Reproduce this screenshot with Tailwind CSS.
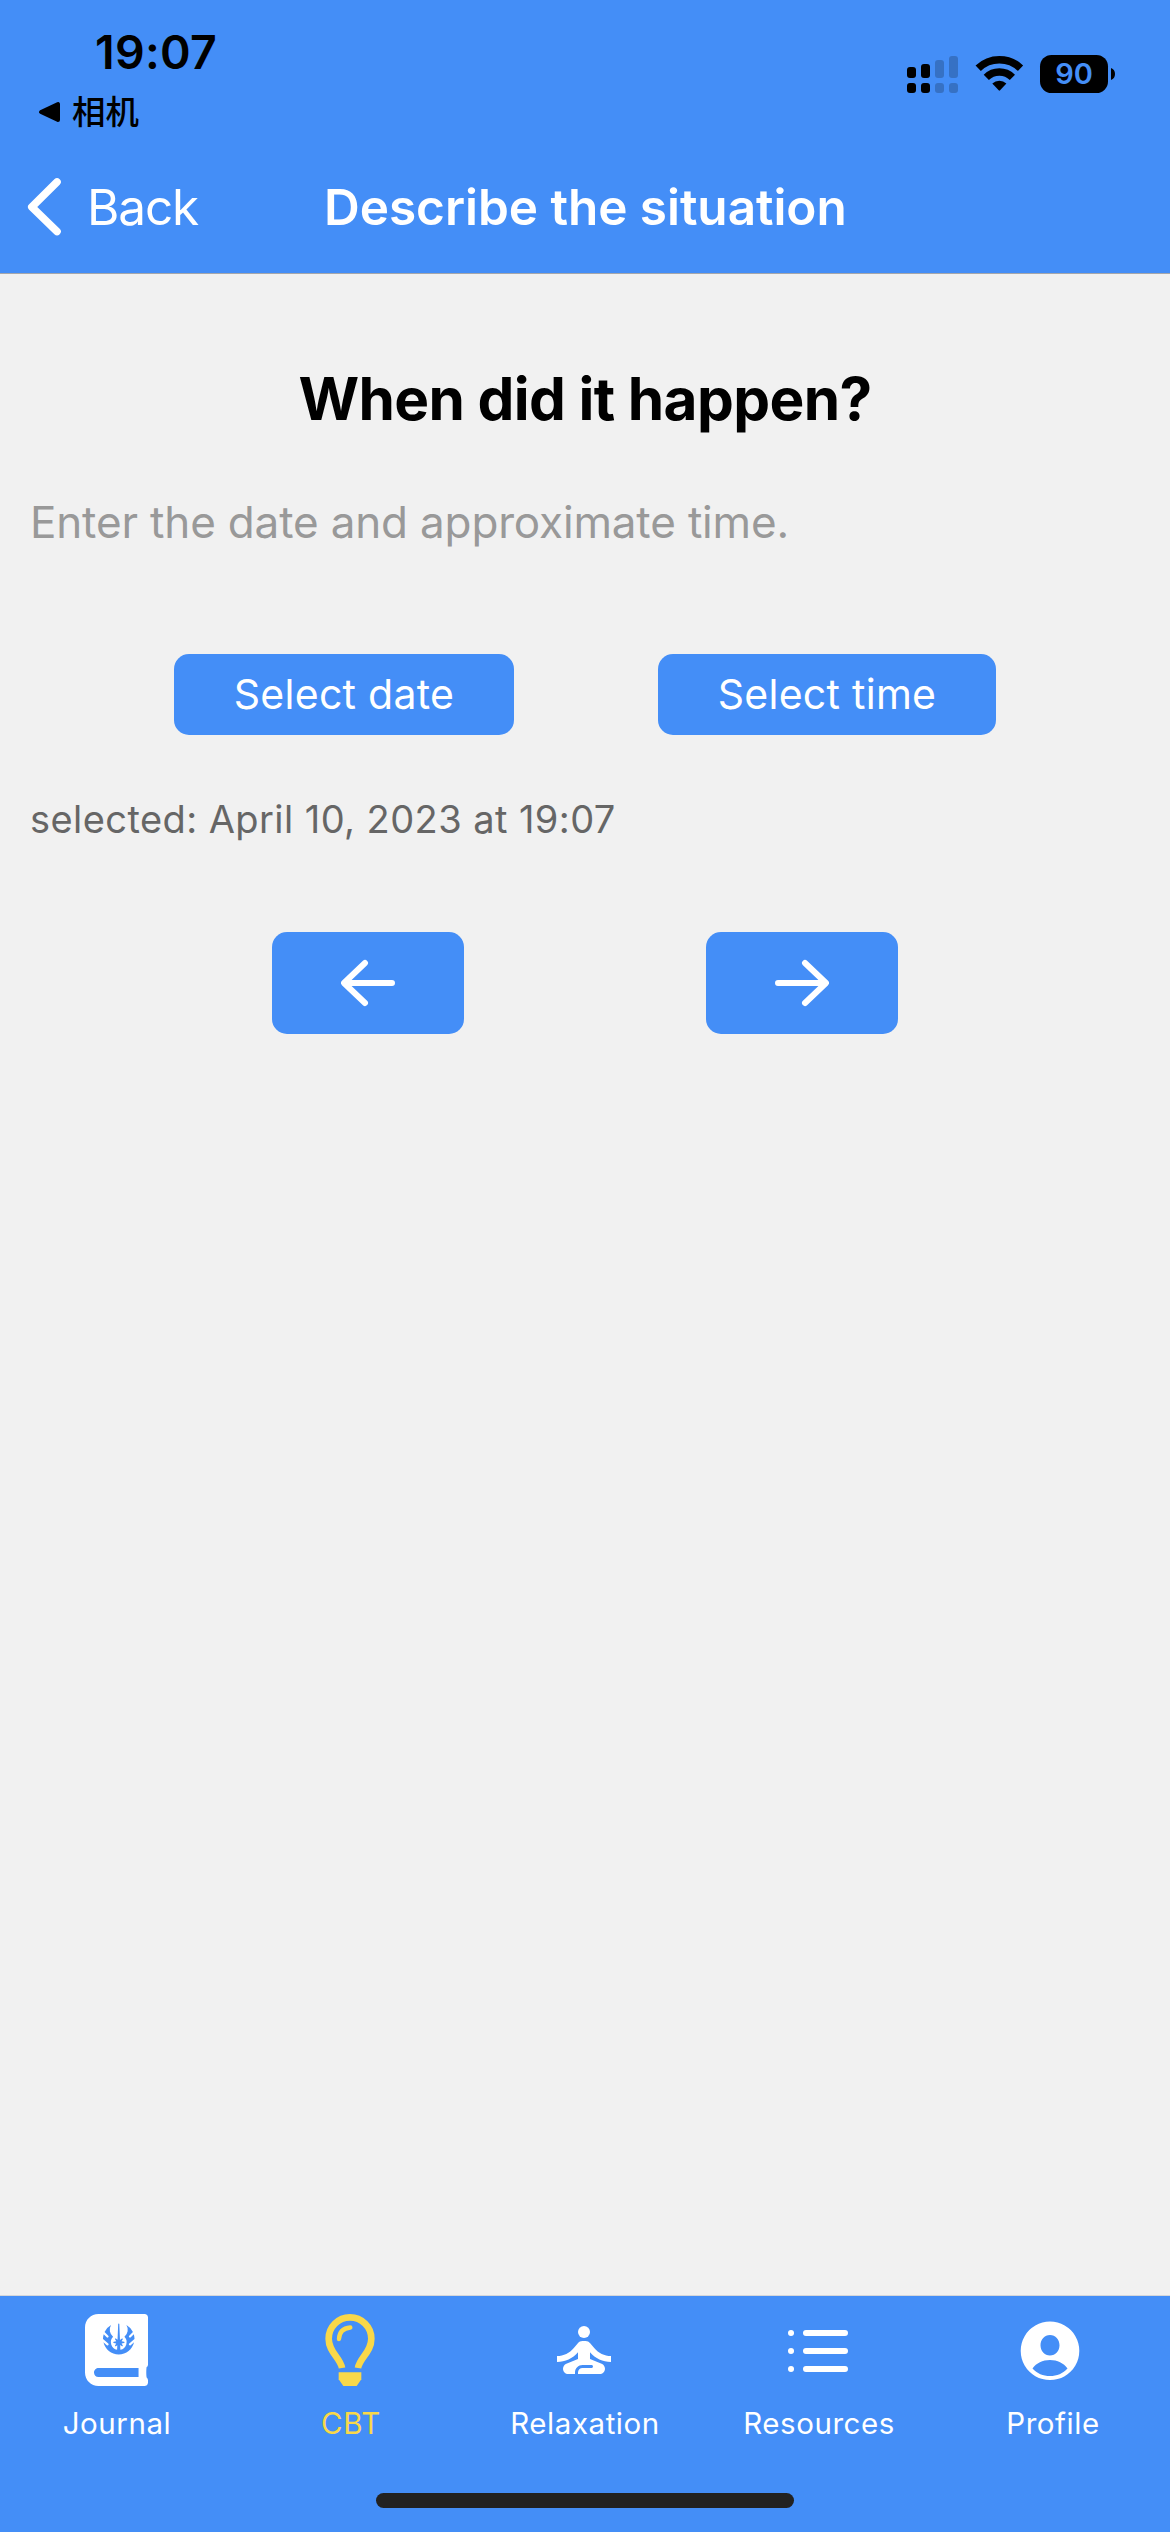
<!DOCTYPE html>
<html lang="en">
<head>
<meta charset="utf-8">
<title>Describe the situation</title>
<script src="https://cdn.jsdelivr.net/npm/@tailwindcss/browser@4"></script>
</head>
<body class="w-[1170px] h-[2532px] overflow-hidden flex flex-col bg-[#f1f1f1] font-[Inter,sans-serif]">

<header class="bg-[#448ef7] h-[274px] border-b border-[#a5a7ac] flex flex-col text-white">
  <!-- status bar -->
  <div class="h-[141px] flex justify-between text-black">
    <div class="pt-[22px] pl-[38px] flex flex-col">
      <div class="pl-[57px] h-[60px] leading-[60px] text-[46.5px] font-semibold tracking-[0.25px]">19:07</div>
      <div class="mt-2 flex items-center">
        <svg class="w-[23px] h-[24px] mt-[3px]" viewBox="0 0 23 24"><path d="M3 12 20 4V20Z" stroke="#000" stroke-width="4" stroke-linejoin="round"/></svg>
        <span class="ml-[11px] leading-[40px] text-[33.5px] font-medium font-['Noto_Sans_CJK_SC',sans-serif]">相机</span>
      </div>
    </div>
    <div class="pt-[55px] pr-[54px] flex items-start">
      <svg class="w-[52px] h-[38px]" viewBox="0 0 52 38">
        <g><rect x="0" y="12" width="9" height="11" rx="3"/><rect x="0" y="28" width="9" height="10" rx="3"/><rect x="14" y="9" width="9" height="14" rx="3"/><rect x="14" y="28" width="9" height="10" rx="3"/></g>
        <g opacity=".2"><rect x="28" y="5" width="9" height="18" rx="3"/><rect x="28" y="28" width="9" height="10" rx="3"/><rect x="42" y="1" width="9" height="22" rx="3"/><rect x="42" y="28" width="9" height="10" rx="3"/></g>
      </svg>
      <svg class="ml-[16px] w-[49px] h-[37px]" viewBox="0 0 49 37">
        <path d="M3.2 13.2A30.5 30.5 0 0 1 45.5 13.2" fill="none" stroke="#000" stroke-width="7.6"/>
        <path d="M11.3 22.3A18.6 18.6 0 0 1 37.4 22.3" fill="none" stroke="#000" stroke-width="7.4"/>
        <path d="M17.3 28.6A10.4 10.4 0 0 1 31.4 28.6L25.1 35.3Q24.4 36 23.7 35.3Z"/>
      </svg>
      <div class="ml-[16px] w-[68px] h-[38px] rounded-[11.5px] bg-black text-[#448ef7] text-center leading-[38px] text-[29px] font-semibold">90</div>
      <svg class="ml-[3px] mt-[13px] w-[5px] h-[12px]" viewBox="0 0 5 12"><path d="M0 0Q4 1.500 4 6T0 12Z"/></svg>
    </div>
  </div>
  <!-- navigation bar -->
  <nav class="h-[132px] grid grid-cols-[324px_1fr] items-center text-[49.5px] leading-[60px]">
    <a class="flex items-center pl-[26px]">
      <svg class="w-[38px] h-[60px]" viewBox="0 0 38 60" fill="none" stroke="#fff" stroke-width="7.6" stroke-linecap="round" stroke-linejoin="round"><path d="M31 5 5.800 30 31 54.500"/></svg>
      <span class="ml-[23px] tracking-[-1.15px]">Back</span>
    </a>
    <h1 class="font-semibold tracking-[-0.04px]">Describe the situation</h1>
  </nav>
</header>

<main class="flex-1 pt-[90px] flex flex-col">
  <h2 class="text-center text-black text-[58.5px] leading-[70px] font-bold tracking-[-0.62px]">When did it happen?</h2>
  <p class="mt-[61px] pl-[30px] text-[44px] leading-[54px] tracking-[-0.16px] text-[#999]">Enter the date and approximate time.</p>
  <div class="mt-[105px] pl-[174px] flex gap-[144px] text-white text-[41px] tracking-[0.27px]">
    <button class="w-[340px] h-[81px] rounded-[15px] bg-[#448ef7]">Select date</button>
    <button class="w-[338px] h-[81px] rounded-[15px] bg-[#448ef7]">Select time</button>
  </div>
  <p class="mt-[61px] pl-[30px] text-[38px] leading-[46px] tracking-[0.43px] text-[#666]">selected: April 10, 2023 at 19:07</p>
  <div class="mt-[90px] pl-[272px] flex gap-[242px]">
    <button class="w-[192px] h-[102px] rounded-[15px] bg-[#448ef7] flex items-center justify-center">
      <svg class="w-[54px] h-[48px]" viewBox="0 0 54 48" fill="none" stroke="#fff" stroke-width="6" stroke-linecap="round" stroke-linejoin="round"><path d="M24 4 3 24 24 44M4 24H51"/></svg>
    </button>
    <button class="w-[192px] h-[102px] rounded-[15px] bg-[#448ef7] flex items-center justify-center">
      <svg class="w-[54px] h-[48px]" viewBox="0 0 54 48" fill="none" stroke="#fff" stroke-width="6" stroke-linecap="round" stroke-linejoin="round"><path d="M30 4 51 24 30 44M50 24H3"/></svg>
    </button>
  </div>
</main>

<footer class="h-[237px] border-t border-[#d5d7da] bg-[#448ef7] pt-[18px] flex flex-col items-center">
  <nav class="w-full grid grid-cols-5 text-white text-[29.5px] leading-[36px] tracking-[0.55px]">
    <a class="flex flex-col items-center gap-[19px]">
      <svg class="w-[63px] h-[72px] mr-px" viewBox="0 0 448 512" fill="currentColor"><path d="M438.40625,377.59375c-3.20313,12.8125-3.20313,57.60937,0,73.60937Q447.9922,460.78907,448,470.40625v16c0,16-12.79688,25.59375-25.59375,25.59375H96c-54.40625,0-96-41.59375-96-96V96C0,41.59375,41.59375,0,96,0H422.40625C438.40625,0,448,9.59375,448,25.59375v332.8125Q448,372.79688,438.40625,377.59375ZM380.79688,384H96c-16,0-32,12.79688-32,32s12.79688,32,32,32H380.79688ZM128.01562,176.01562c0,.51563.14063.98438.14063,1.5l37.10937,32.46876A7.99954,7.99954,0,0,1,160,224h-.01562a9.17678,9.17678,0,0,1-5.25-1.98438L131.14062,201.375C142.6875,250.95312,186.90625,288,240,288s97.3125-37.04688,108.875-86.625l-23.59375,20.64062a8.02516,8.02516,0,0,1-5.26563,1.96876H320a9.14641,9.14641,0,0,1-6.01562-2.71876A9.26508,9.26508,0,0,1,312,216a9.097,9.097,0,0,1,2.73438-6.01562l37.10937-32.46876c.01563-.53124.15625-1,.15625-1.51562,0-11.04688-2.09375-21.51562-5.06251-31.59375l-21.26562,21.25a8.00467,8.00467,0,0,1-11.32812-11.3125l26.42187-26.40625a111.81517,111.81517,0,0,0-46.35937-49.26563,63.02336,63.02336,0,0,1-14.0625,82.64063A55.83846,55.83846,0,0,1,251.625,254.73438l-1.42188-34.28126,12.67188,8.625a3.967,3.967,0,0,0,2.25.6875,3.98059,3.98059,0,0,0,3.43749-6.03124l-8.53124-14.3125,17.90625-3.71876a4.00647,4.00647,0,0,0,0-7.84374l-17.90625-3.71876,8.53124-14.3125a3.98059,3.98059,0,0,0-3.43749-6.03124,4.726,4.726,0,0,0-2.25.67187L248.6875,184.125,244,71.82812a4.00386,4.00386,0,0,0-8,0l-4.625,110.8125-12-8.15624a4.003,4.003,0,0,0-5.68751,5.35937l8.53126,14.3125L204.3125,197.875a3.99686,3.99686,0,0,0,0,7.82812l17.90625,3.73438-8.53126,14.29688a4.72469,4.72469,0,0,0-.56249,2.04687,4.59547,4.59547,0,0,0,1.25,2.90625,4.01059,4.01059,0,0,0,2.75,1.09375,4.09016,4.09016,0,0,0,2.25-.6875l10.35937-7.04687L228.375,254.76562a55.86414,55.86414,0,0,1-28.71875-93.45312,63.01119,63.01119,0,0,1-14.04688-82.65625,111.93158,111.93158,0,0,0-46.375,49.26563l26.42187,26.42187a7.99917,7.99917,0,0,1-11.3125,11.3125l-21.26563-21.26563C130.09375,154.48438,128,164.95312,128,176Z"/></svg>
      <span>Journal</span>
    </a>
    <a class="flex flex-col items-center gap-[19px] text-[#f9d849]">
      <svg class="w-[72px] h-[72px] mr-0.5" viewBox="821 102 216 216" fill="none" stroke="currentColor"><path d="M905 264C900 233 865 217 865 176A64 64 0 0 1 993 176C993 217 958 233 953 264" stroke-width="20"/><path d="M896 177Q897 146 930 142.500" stroke-width="13" stroke-linecap="round"/><path d="M895 277H963V298L949 318H909L895 298Z" fill="currentColor" stroke="none"/></svg>
      <span>CBT</span>
    </a>
    <a class="flex flex-col items-center gap-[19px]">
      <svg class="w-[72px] h-[72px] mr-0.5" viewBox="0 0 24 24" fill="currentColor"><circle cx="12" cy="6" r="2"/><path d="M21 16v-2c-2.240 0-4.160-.960-5.600-2.680l-1.340-1.600A1.980 1.980 0 0 0 12.530 9H11.480c-.590 0-1.150.260-1.530.720l-1.340 1.600C7.160 13.040 5.240 14 3 14v2c2.770 0 5.190-1.170 7-3.250V15l-3.880 1.550c-.670.270-1.120.920-1.120 1.660C5 19.200 5.800 20 6.790 20H9v-.500c0-1.380 1.120-2.500 2.500-2.500h3c.280 0 .500.220.500.500s-.220.500-.500.500h-3c-.830 0-1.500.670-1.500 1.500v.500h7.210c.990 0 1.790-.800 1.790-1.790 0-.740-.450-1.390-1.120-1.660L14 15v-2.250c1.810 2.080 4.230 3.250 7 3.250z"/></svg>
      <span>Relaxation</span>
    </a>
    <a class="flex flex-col items-center gap-[19px]">
      <svg class="w-[72px] h-[72px] mr-0.5" viewBox="0 -.300 24 24" fill="none" stroke="currentColor" stroke-width="2" stroke-linecap="round"><path d="M8 6H21M8 12H21M8 18H21M3 6H3.010M3 12H3.010M3 18H3.010"/></svg>
      <span>Resources</span>
    </a>
    <a class="flex flex-col items-center gap-[19px]">
      <svg class="w-[72px] h-[72px] mr-1.5" viewBox="0 0 72 72" fill="currentColor" fill-rule="evenodd"><path d="M36 7.500a29.300 29.300 0 1 0 .010 0ZM36 21c-5.500 0-9.500 4.600-9.500 10.300S30.500 41.600 36 41.600s9.500-4.600 9.500-10.300S41.500 21 36 21ZM18.500 54.500C22.500 49 28.500 46 36 46s13.500 3 17.500 8.500C49 59.500 43 62 36 62s-13-2.500-17.500-7.500Z"/></svg>
      <span>Profile</span>
    </a>
  </nav>
  <div class="mt-[52px] w-[418px] h-[15px] rounded-full bg-[#222]"></div>
</footer>
</body>
</html>
